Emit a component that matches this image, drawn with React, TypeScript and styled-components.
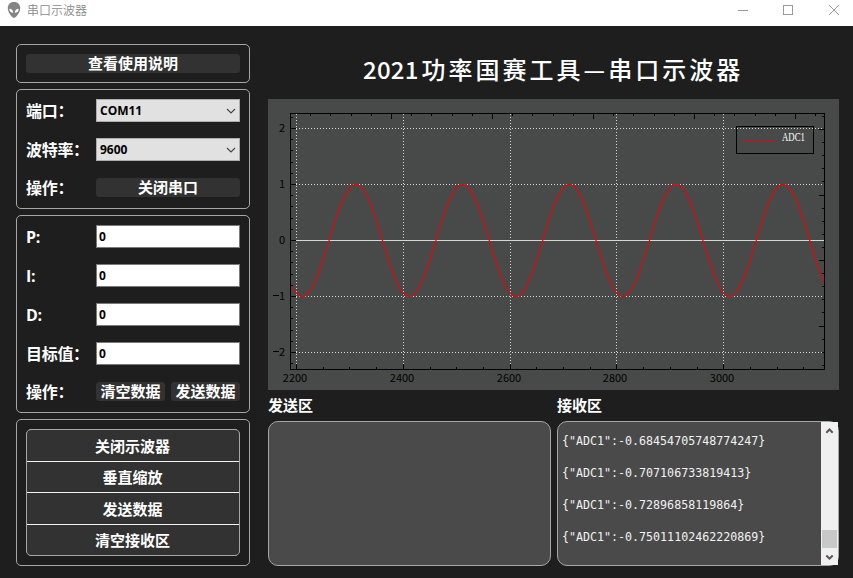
import React from "react";
import styled, { createGlobalStyle } from "styled-components";

const Global = createGlobalStyle`
  * { box-sizing: border-box; }
  html, body { margin: 0; padding: 0; background: #1e1e1e; }
  body { font-family: "Open Sans", "Noto Sans CJK SC", sans-serif; overflow: hidden; }
`;

const Window = styled.div`
  width: 853px;
  height: 578px;
  display: flex;
  flex-direction: column;
  background: #1e1e1e;
  color: #fff;
`;

const TitleBar = styled.header`
  height: 26px;
  flex: none;
  display: flex;
  align-items: flex-start;
  background: #fff;
  color: #999;
  padding-left: 7px;
`;

const AppIcon = styled.svg`
  margin-top: 2px;
`;

const AppName = styled.span`
  flex: 1;
  margin-left: 6px;
  font: 350 12px/20px "Noto Sans CJK SC", sans-serif;
  color: #8c8c8c;
`;

const Body = styled.main`
  flex: 1;
  display: flex;
  gap: 18px;
  padding: 18px 14px 12px 16px;
`;

const Sidebar = styled.aside`
  width: 234px;
  display: flex;
  flex-direction: column;
  gap: 6px;
`;

const Panel = styled.section<{ $h: number; $gap?: number }>`
  height: ${(p) => p.$h}px;
  border: 1px solid #a6a6a6;
  border-radius: 5px;
  padding: 9px;
  display: flex;
  flex-direction: column;
  gap: ${(p) => p.$gap ?? 0}px;
`;

const Row = styled.div<{ $h?: number }>`
  display: flex;
  align-items: center;
  gap: 6px;
  height: ${(p) => p.$h ?? 23}px;
`;

const Label = styled.label`
  width: 64px;
  flex: none;
  padding-top: 2px;
  font: 700 16px/23px "Open Sans", "Noto Sans CJK SC", sans-serif;
  letter-spacing: -0.3px;
  white-space: nowrap;
`;

const Button = styled.button`
  flex: 1;
  min-width: 0;
  height: 19px;
  padding: 0;
  border: 0;
  border-radius: 3px;
  background: #323232;
  color: #fff;
  font: 600 15px/17px "Noto Sans CJK SC", sans-serif;
  padding-bottom: 2px;
  white-space: nowrap;
`;

const Field = styled.div<{ $select?: boolean }>`
  flex: 1;
  height: 23px;
  display: flex;
  align-items: center;
  justify-content: space-between;
  padding: 0 ${(p) => (p.$select ? 3 : 2)}px;
  border: 1px solid ${(p) => (p.$select ? "#adadad" : "#7a7a7a")};
  background: ${(p) => (p.$select ? "#e1e1e1" : "#fff")};
  color: #000;
  font: 700 12px/21px "Open Sans", sans-serif;
`;

const Stack = styled.div`
  height: 127px;
  display: grid;
  grid-template-rows: 31px 30px 31px 30px;
  gap: 1px;
  border: 1px solid #a6a6a6;
  border-radius: 5px;
  background: #f4f4f4;
  overflow: hidden;
`;

const StackButton = styled.button`
  border: 0;
  padding: 0 1px 1px 0;
  background: #323232;
  color: #fff;
  font: 600 15px/29px "Noto Sans CJK SC", sans-serif;
`;

const Content = styled.div`
  width: 571px;
  display: flex;
  flex-direction: column;
`;

const Heading = styled.h1`
  height: 55px;
  margin: 0;
  padding: 0 0 5px 95px;
  display: flex;
  align-items: center;
  font: 500 24px/50px "Noto Sans CJK SC", "Noto Sans CJK TC", sans-serif;
  letter-spacing: 3px;
  white-space: nowrap;
`;

const Year = styled.span`
  font-weight: 500;
  letter-spacing: 0.2px;
  margin-right: 3px;
`;

const Chart = styled.svg`
  display: block;
  flex: none;
  background: #484a49;
`;

const Panes = styled.div`
  display: grid;
  grid-template-columns: 283px 282px;
  gap: 6px;
`;

const PaneTitle = styled.div`
  height: 31px;
  font: 700 15px/30px "Noto Sans CJK SC", sans-serif;
`;

const Pane = styled.div`
  height: 145px;
  display: flex;
  border: 1px solid #a6a6a6;
  border-radius: 10px;
  background: #4a4a4a;
`;

const Log = styled.div`
  flex: 1;
  padding: 3px 0 0 4px;
  font: 11.65px/32px "DejaVu Sans Mono", monospace;
  color: #f2f2f2;
  white-space: nowrap;
`;

const ScrollBar = styled.div`
  width: 17px;
  height: 143px;
  display: flex;
  flex-direction: column;
  align-items: center;
  background: #f0f0f0;
`;

const Thumb = styled.div`
  width: 15px;
  height: 18px;
  margin-top: auto;
  background: #c8c8c8;
`;

const Alien = () => (
  <AppIcon width="14" height="17" viewBox="0 0 14 17">
    <path d="M7 0C3 0 .8 2.6.8 6.1c0 4.3 3.2 8 5 9.300q1.200.8 2.400 0c1.800-1.300 5-5 5-9.300C13.200 2.600 11 0 7 0Z" fill="#848484" />
    <path d="M2.300 6.800c2.200 0 3.900 1.500 3.900 4-2.500 0-3.900-1.600-3.900-4Zm9.400 0c-2.200 0-3.900 1.500-3.900 4 2.500 0 3.900-1.600 3.900-4Z" fill="#fff" />
  </AppIcon>
);

const Controls = () => (
  <svg width="116" height="20" fill="none" stroke="#999" shapeRendering="crispEdges">
    <path d="M1 10.500h10M46.500 5.500h9v9h-9z" />
    <path d="M92 5l10 10M102 5l-10 10" shapeRendering="auto" />
  </svg>
);

const Chevron = ({ up = false, heavy = false }: { up?: boolean; heavy?: boolean }) => (
  <svg width={heavy ? 17 : 10} height={heavy ? 17 : 6} viewBox={heavy ? "-3.500 -6 17 17" : "0 0 10 6"} fill="none">
    <path
      d={heavy ? (up ? "M1.800 4.700L5 1.500l3.200 3.200" : "M1.800 1.500L5 4.700l3.200-3.200") : "M1 1l4 4 4-4"}
      stroke={heavy ? "#5f5558" : "#444"}
      strokeWidth={heavy ? 2 : 1.1}
    />
  </svg>
);

// Plot coordinates, relative to the chart's top-left corner.
const L = 22.5, R = 556.5, T = 14.5, B = 270.5;
const gridX = [28, 135, 242, 348, 455];
const gridY = [29, 85, 141, 197, 253];

const wave = Array.from({ length: 533 }, (_, i) => {
  const x = 24 + i;
  const y = 141.5 + 56 * Math.cos(((x - 34.4) / 106.8) * 2 * Math.PI);
  return `${i ? "L" : "M"}${x} ${y.toFixed(2)}`;
}).join("");

const ticks = (() => {
  let d = "";
  for (let i = 0; i < 20; i++) {
    const x = Math.round(28 + i * 26.7) + 0.5;
    if (x < R) d += `M${x} ${B}v${i % 4 ? -2.5 : -5.5}`;
  }
  for (let i = 0; i < 27; i++) {
    const x = Math.round(22 + i * 20.2) + 0.5;
    if (x < R) d += `M${x} ${T}v${i % 5 ? 2.5 : 5.5}`;
  }
  for (let i = -1; i < 22; i++) {
    const y = Math.round(29 + i * 11.2) + 0.5;
    d += `M${L} ${y}h${i % 5 ? 2.5 : 5.5}`;
  }
  for (let i = -1; i < 19; i++) {
    const y = Math.round(30 + i * 13.1) + 0.5;
    if (y < B) d += `M${R} ${y}h${i % 5 ? -2.5 : -5.5}`;
  }
  return d;
})();

const Oscilloscope = () => (
  <Chart width="571" height="291">
    <g stroke="#d3d8d3" shapeRendering="crispEdges">
      {gridX.map((x) => (
        <path key={x} d={`M${x + 0.5} 15V270`} strokeDasharray="1 2" />
      ))}
      {gridY.map((y) => (
        <path key={y} d={`M28 ${y + 0.5}H556`} strokeDasharray={y === 141 ? undefined : "1 2"} />
      ))}
    </g>
    <path d={wave} fill="none" stroke="#e00808" strokeWidth="1.2" />
    <g fill="none" stroke="#000" shapeRendering="crispEdges">
      <rect x={L} y={T} width={R - L} height={B - T} />
      <path d={ticks} />
      <rect x="468.5" y="27.5" width="77" height="27" />
    </g>
    <path d="M475 41.500h32" stroke="#dc0c0c" shapeRendering="crispEdges" />
    <text x="514" y="42" fill="#fff" fontFamily="Liberation Serif, serif" fontSize="11.5" textLength="23" lengthAdjust="spacingAndGlyphs">ADC1</text>
    <g fill="#000" fontFamily="Noto Sans CJK SC, sans-serif" fontSize="11">
      {gridX.map((x, i) => (
        <text key={x} x={x - 1} y="283" textAnchor="middle">{2200 + i * 200}</text>
      ))}
      {gridY.map((y, i) => (
        <g key={y}>
          <text x="17" y={y + 4} textAnchor="end">{Math.abs(2 - i)}</text>
          {i > 2 && <path d={`M5 ${y - 0.5}h6`} stroke="#000" />}
        </g>
      ))}
    </g>
  </Chart>
);

const readings = ["-0.68454705748774247", "-0.707106733819413", "-0.72896858119864", "-0.75011102462220869"];

export default function App() {
  return (
    <>
      <Global />
      <Window>
        <TitleBar>
          <Alien />
          <AppName>串口示波器</AppName>
          <Controls />
        </TitleBar>
        <Body>
          <Sidebar>
            <Panel $h={39}>
              <Row $h={19}><Button>查看使用说明</Button></Row>
            </Panel>
            <Panel $h={120} $gap={16}>
              <Row><Label>端口：</Label><Field $select>COM11<Chevron /></Field></Row>
              <Row><Label>波特率：</Label><Field $select>9600<Chevron /></Field></Row>
              <Row $h={21}><Label>操作：</Label><Button>关闭串口</Button></Row>
            </Panel>
            <Panel $h={198} $gap={16}>
              {["P:", "I:", "D:", "目标值："].map((name) => (
                <Row key={name}><Label>{name}</Label><Field>0</Field></Row>
              ))}
              <Row $h={21}><Label>操作：</Label><Button>清空数据</Button><Button>发送数据</Button></Row>
            </Panel>
            <Panel $h={147}>
              <Stack>
                {["关闭示波器", "垂直缩放", "发送数据", "清空接收区"].map((name) => (
                  <StackButton key={name}>{name}</StackButton>
                ))}
              </Stack>
            </Panel>
          </Sidebar>
          <Content>
            <Heading><Year>2021</Year>功率国赛工具—串口示波器</Heading>
            <Oscilloscope />
            <Panes>
              <div>
                <PaneTitle>发送区</PaneTitle>
                <Pane />
              </div>
              <div>
                <PaneTitle>接收区</PaneTitle>
                <Pane>
                  <Log>
                    {readings.map((v) => (
                      <div key={v}>{`{"ADC1":${v}}`}</div>
                    ))}
                  </Log>
                  <ScrollBar>
                    <Chevron heavy up />
                    <Thumb />
                    <Chevron heavy />
                  </ScrollBar>
                </Pane>
              </div>
            </Panes>
          </Content>
        </Body>
      </Window>
    </>
  );
}
